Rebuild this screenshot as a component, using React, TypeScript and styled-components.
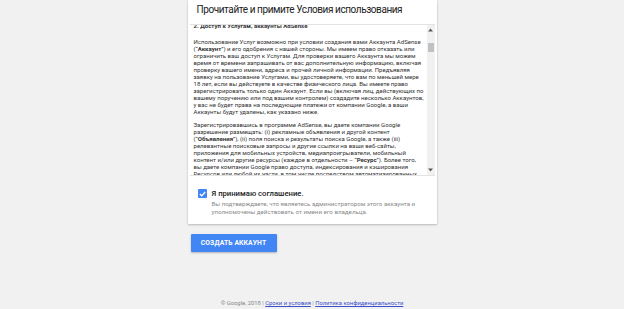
import React, { useLayoutEffect, useRef } from "react";
import styled, { createGlobalStyle } from "styled-components";

const GlobalStyle = createGlobalStyle`
  html, body { margin: 0; padding: 0; }
  body {
    background: #f1f1f1;
    font-family: Roboto, "Liberation Sans", Arial, sans-serif;
    color: #212121;
  }
`;

const Page = styled.div`
  display: flex;
  flex-direction: column;
  align-items: center;
  height: 309px;
  overflow: hidden;
`;

const Column = styled.div`
  width: 249px;
  display: flex;
  flex-direction: column;
`;

const Card = styled.div`
  background: #fff;
  box-shadow: 0 1px 2px rgba(0, 0, 0, 0.22), 0 0 1px rgba(0, 0, 0, 0.12);
  display: flex;
  flex-direction: column;
  padding-bottom: 8px;
`;

const Title = styled.h1`
  margin: 0;
  height: 24px;
  padding: 0 9px;
  font-size: 10px;
  font-weight: 400;
  letter-spacing: -0.42px;
  line-height: 20px;
  color: #212121;
  white-space: nowrap;
`;

const TermsBox = styled.div`
  display: flex;
  height: 150px;
  margin: 0 2px;
  border-top: 1px solid #e3e3e3;
  border-bottom: 1px solid #e3e3e3;
`;

const Viewport = styled.div`
  flex: 1;
  overflow: hidden;
  padding: 0 4px;
`;

const Content = styled.div`
  padding-top: 3px;
  font-size: 6.05px;
  line-height: 7px;
  color: #333;
  white-space: nowrap;
`;

const Heading = styled.div`
  font-weight: 700;
  margin-bottom: 9px;
`;

const Para = styled.p`
  margin: 0 0 6px;
`;

const Scrollbar = styled.div`
  width: 8px;
  background: #f1f1f1;
  display: flex;
  flex-direction: column;
`;

const ArrowButton = styled.div`
  height: 10px;
  display: flex;
  align-items: center;
  justify-content: center;
`;

const Track = styled.div`
  flex: 1;
  display: flex;
  flex-direction: column;
`;

const Thumb = styled.div<{ $offset: number }>`
  height: 9px;
  margin: ${(p) => p.$offset}px 1px 0;
  background: #c1c1c1;
`;

const AgreeSection = styled.div`
  display: flex;
  gap: 5px;
  padding: 12px 10px 0;
`;

const CheckBox = styled.div`
  width: 9px;
  height: 9px;
  border-radius: 1px;
  background: #4285f4;
  display: flex;
  align-items: center;
  justify-content: center;
  flex-shrink: 0;
  margin-top: 1px;
`;

const AgreeText = styled.div`
  display: flex;
  flex-direction: column;
`;

const AgreeLabel = styled.div`
  font-size: 7.7px;
  line-height: 11px;
  font-weight: 500;
  color: #212121;
  white-space: nowrap;
`;

const AgreeHint = styled.div`
  margin-top: 2px;
  font-size: 6.2px;
  line-height: 7.5px;
  color: #8a8a8a;
  white-space: nowrap;
`;

const CreateButton = styled.button`
  align-self: flex-start;
  margin: 10px 0 0 3px;
  width: 86px;
  height: 18px;
  border: none;
  border-radius: 1px;
  background: #4285f4;
  color: #fff;
  font-family: Roboto, "Liberation Sans", Arial, sans-serif;
  font-size: 6.8px;
  font-weight: 700;
  letter-spacing: 0.1px;
  text-transform: uppercase;
  box-shadow: 0 1px 2px rgba(0, 0, 0, 0.25);
  padding: 0;
`;

const Footer = styled.div`
  margin-top: auto;
  padding-bottom: 2px;
  font-size: 5.85px;
  line-height: 7px;
  color: #8a8a8a;
  white-space: nowrap;
`;

const FooterLink = styled.a`
  color: #3b4fc9;
  text-decoration: underline;
`;

const Arrow = ({ up }: { up?: boolean }) => (
  <svg width="5" height="4" viewBox="0 0 5 4">
    <path d={up ? "M0 3.5 L2.5 0.5 L5 3.5 Z" : "M0 0.5 L2.5 3.5 L5 0.5 Z"} fill="#5a5a5a" />
  </svg>
);

export default function App() {
  const vpRef = useRef<HTMLDivElement>(null);
  useLayoutEffect(() => {
    if (vpRef.current) vpRef.current.scrollTop = 6;
  }, []);
  return (
    <>
      <GlobalStyle />
      <Page>
        <Column>
          <Card>
            <Title>Прочитайте и примите Условия использования</Title>
            <TermsBox>
              <Viewport ref={vpRef}>
                <Content>
                  <Heading>2. Доступ к Услугам, аккаунты AdSense</Heading>
                  <Para>
                    Использование Услуг возможно при условии создания вами Аккаунта AdSense
                    <br />
                    (“<b>Аккаунт</b>”) и его одобрения с нашей стороны. Мы имеем право отказать или
                    <br />
                    ограничить ваш доступ к Услугам. Для проверки вашего Аккаунта мы можем
                    <br />
                    время от времени запрашивать от вас дополнительную информацию, включая
                    <br />
                    проверку вашего имени, адреса и прочей личной информации. Предъявляя
                    <br />
                    заявку на пользование Услугами, вы удостоверяете, что вам по меньшей мере
                    <br />
                    18 лет, если вы действуете в качестве физического лица. Вы имеете право
                    <br />
                    зарегистрировать только один Аккаунт. Если вы (включая лиц, действующих по
                    <br />
                    вашему поручению или под вашим контролем) создадите несколько Аккаунтов,
                    <br />
                    у вас не будет права на последующие платежи от компании Google, а ваши
                    <br />
                    Аккаунты будут удалены, как указано ниже.
                  </Para>
                  <Para>
                    Зарегистрировавшись в программе AdSense, вы даете компании Google
                    <br />
                    разрешение размещать: (i) рекламные объявления и другой контент
                    <br />
                    (“<b>Объявления</b>”), (ii) поля поиска и результаты поиска Google, а также (iii)
                    <br />
                    релевантные поисковые запросы и другие ссылки на ваши веб-сайты,
                    <br />
                    приложения для мобильных устройств, медиапроигрыватели, мобильный
                    <br />
                    контент и/или другие ресурсы (каждое в отдельности – “<b>Ресурс</b>”). Более того,
                    <br />
                    вы даете компании Google право доступа, индексирования и кэширования
                    <br />
                    Ресурсов или любой их части, в том числе посредством автоматизированных
                    <br />
                    средств. Компания Google может отказать в предоставлении доступа к Услугам
                  </Para>
                </Content>
              </Viewport>
              <Scrollbar>
                <ArrowButton>
                  <Arrow up />
                </ArrowButton>
                <Track>
                  <Thumb $offset={8} />
                </Track>
                <ArrowButton>
                  <Arrow />
                </ArrowButton>
              </Scrollbar>
            </TermsBox>
            <AgreeSection>
              <CheckBox>
                <svg width="7" height="6" viewBox="0 0 7 6">
                  <path d="M0.8 3 L2.7 4.8 L6.2 1" stroke="#fff" strokeWidth="1.2" fill="none" />
                </svg>
              </CheckBox>
              <AgreeText>
                <AgreeLabel>Я принимаю соглашение.</AgreeLabel>
                <AgreeHint>
                  Вы подтверждаете, что являетесь администратором этого аккаунта и
                  <br />
                  уполномочены действовать от имени его владельца.
                </AgreeHint>
              </AgreeText>
            </AgreeSection>
          </Card>
          <CreateButton>Создать аккаунт</CreateButton>
        </Column>
        <Footer>
          © Google, 2018 | <FooterLink>Сроки и условия</FooterLink> |{" "}
          <FooterLink>Политика конфиденциальности</FooterLink>
        </Footer>
      </Page>
    </>
  );
}
